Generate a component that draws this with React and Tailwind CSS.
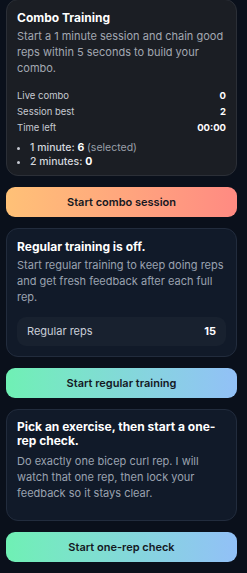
import React from 'react';

const font = { fontFamily: 'Inter, "Noto Sans", sans-serif' };

const StatRow = ({ label, value }) => (
  <div className="flex h-4 items-center justify-between text-[9.5px] leading-4">
    <span className="text-[#c5c9d1]">{label}</span>
    <span className="font-bold text-white">{value}</span>
  </div>
);

const GradientButton = ({ children, tone }) => (
  <button
    className={
      'flex h-[30px] w-full items-center justify-center rounded-[9px] text-[11px] font-semibold text-[#14181f] ' +
      (tone === 'warm'
        ? 'bg-gradient-to-r from-[#ffc177] to-[#ff8a82]'
        : 'bg-gradient-to-r from-[#6ff0b4] to-[#92c0f7]')
    }
  >
    {children}
  </button>
);

export default function App() {
  return (
    <div className="h-screen overflow-hidden bg-[#0a101b] pl-[6px] pr-[10px]" style={font}>
      <div className="-mt-[1px] flex flex-col gap-[11px] pb-6">
        {/* Combo card */}
        <section className="rounded-[12px] border border-[#2b2f37] bg-[#1b1e24] px-[10px] pt-[10px] pb-[6px]">
          <h2 className="text-[12px] font-bold leading-4 text-white">Combo Training</h2>
          <p className="mt-[2px] text-[11px] leading-4 text-[#a3a8b2]">
            Start a 1 minute session and chain good reps within 5 seconds to build your combo.
          </p>
          <div className="mt-3">
            <StatRow label="Live combo" value="0" />
            <StatRow label="Session best" value="2" />
            <StatRow label="Time left" value="00:00" />
          </div>
          <ul className="mt-[5px] list-disc pl-[13px] text-[10.5px] font-medium leading-[14px] text-[#d4d7dd] marker:text-[#c5c9d1]">
            <li>
              1 minute: <span className="font-bold text-white">6</span>{' '}
              <span className="font-normal text-[#9aa0aa]">(selected)</span>
            </li>
            <li>
              2 minutes: <span className="font-bold text-white">0</span>
            </li>
          </ul>
        </section>

        <GradientButton tone="warm">Start combo session</GradientButton>

        {/* Regular training card */}
        <section className="rounded-[12px] border border-[#222c3d] bg-[#111a29] p-[10px]">
          <h2 className="text-[12px] font-bold leading-4 text-white">Regular training is off.</h2>
          <p className="mt-[2px] text-[11px] leading-4 text-[#9aa2b0]">
            Start regular training to keep doing reps and get fresh feedback after each full rep.
          </p>
          <div className="mt-3 flex h-[29px] items-center justify-between rounded-[9px] bg-[#18212f] px-[10px] text-[11px]">
            <span className="text-[#c9ced8]">Regular reps</span>
            <span className="font-bold text-white">15</span>
          </div>
        </section>

        <GradientButton tone="cool">Start regular training</GradientButton>

        {/* One-rep check card */}
        <section className="rounded-[12px] border border-[#222c3d] bg-[#111a29] px-[10px] pt-[10px] pb-[19px]">
          <h2 className="text-[12px] font-bold leading-[14px] text-white">
            Pick an exercise, then start a one-rep check.
          </h2>
          <p className="mt-[5px] text-[11px] leading-4 text-[#9aa2b0]">
            Do exactly one bicep curl rep. I will watch that one rep, then lock your feedback so it stays clear.
          </p>
        </section>

        <GradientButton tone="cool">Start one-rep check</GradientButton>

        <section className="h-24 rounded-[12px] border border-[#222c3d] bg-[#111a29]" />
      </div>
    </div>
  );
}
